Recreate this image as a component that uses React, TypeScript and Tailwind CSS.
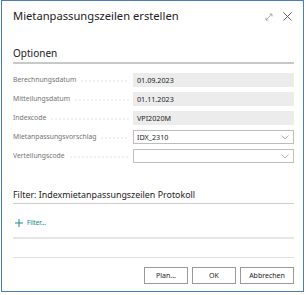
import React from 'react';

const fields = [
  { label: 'Berechnungsdatum', value: '01.09.2023', kind: 'readonly' },
  { label: 'Mitteilungsdatum', value: '01.11.2023', kind: 'readonly' },
  { label: 'Indexcode', value: 'VPI2020M', kind: 'readonly' },
  { label: 'Mietanpassungsvorschlag', value: 'IDX_2310', kind: 'select' },
  { label: 'Verteilungscode', value: '', kind: 'select' },
];

function Chevron() {
  return (
    <svg width="8" height="5" viewBox="0 0 8 5" fill="none" stroke="#999999" strokeWidth="0.8">
      <path d="M0.5 0.5 L4 4 L7.5 0.5" />
    </svg>
  );
}

export default function App() {
  return (
    <div className="w-[306px] h-[295px] bg-white" style={{ fontFamily: '"Noto Sans", "Open Sans", sans-serif' }}>
      <div className="ml-[1px] w-[303px] h-[292px] border border-[#4a7ebb] flex flex-col pl-[11px] pr-[9px]">
        {/* header */}
        <div className="flex items-center justify-between h-[30px] pt-[1px]">
          <span className="text-[11.2px] text-[#212121]">Mietanpassungszeilen erstellen</span>
          <div className="flex items-center gap-[10px] mr-[2px]">
            <svg width="8" height="8" viewBox="0 0 8 8" fill="none" stroke="#9a9a9a" strokeWidth="0.8">
              <path d="M1 7 L7 1 M4.5 1 H7 V3.5 M1 4.5 V7 H3.5" />
            </svg>
            <svg width="9" height="9" viewBox="0 0 9 9" fill="none" stroke="#505050" strokeWidth="0.9">
              <path d="M0.5 0.5 L8.5 8.5 M8.5 0.5 L0.5 8.5" />
            </svg>
          </div>
        </div>

        {/* Optionen */}
        <div className="mt-[15px] text-[10px] text-[#212121] leading-[14px]">Optionen</div>
        <div className="mt-[2px] h-[2px] bg-[#c8c8c8]" />

        <div className="mt-[9px] flex flex-col gap-[5px]">
          {fields.map((f) => (
            <div key={f.label} className="flex items-center h-[14px]">
              <div className="w-[120px] flex items-center overflow-hidden">
                <span className="text-[6.8px] text-[#737373] whitespace-nowrap">{f.label}</span>
                <span className="flex-1 ml-[4px] mr-[4px] h-[2px] translate-y-[1px] bg-[radial-gradient(circle,#d2d2d2_0.5px,transparent_0.8px)] bg-[length:4px_2px]" />
              </div>
              {f.kind === 'readonly' ? (
                <div className="flex-1 h-full bg-[#ececec] flex items-center px-[4px] text-[7.2px] text-[#212121]">
                  {f.value}
                </div>
              ) : (
                <div className="flex-1 h-full bg-white border border-[#bdbdbd] flex items-center justify-between pl-[3px] pr-[4px] text-[7.2px] text-[#212121]">
                  <span>{f.value}</span>
                  <Chevron />
                </div>
              )}
            </div>
          ))}
        </div>

        {/* Filter */}
        <div className="mt-[25px] text-[8.9px] text-[#212121] leading-[13px]">Filter: Indexmietanpassungszeilen Protokoll</div>
        <div className="mt-[2px] h-px bg-[#cfcfcf]" />

        <div className="mt-[14px] flex items-center gap-[4px] pl-[2px] text-[#00857f]">
          <svg width="8" height="8" viewBox="0 0 8 8" fill="none" stroke="#00857f" strokeWidth="0.9">
            <path d="M4 0 V8 M0 4 H8" />
          </svg>
          <span className="text-[6.3px]">Filter...</span>
        </div>

        <div className="mt-[10px] h-[2px] bg-[#e6e6e6]" />
        <div className="mt-[18px] h-px bg-[#e0e0e0]" />

        <div className="mt-[9px] flex justify-end gap-[4px]">
          <button className="w-[44px] h-[17px] border border-[#9a9a9a] bg-white text-[7px] text-[#212121]">Plan...</button>
          <button className="w-[44px] h-[17px] border border-[#9a9a9a] bg-white text-[7px] text-[#212121]">OK</button>
          <button className="w-[54px] h-[17px] border border-[#9a9a9a] bg-white text-[7px] text-[#212121]">Abbrechen</button>
        </div>
      </div>
    </div>
  );
}
